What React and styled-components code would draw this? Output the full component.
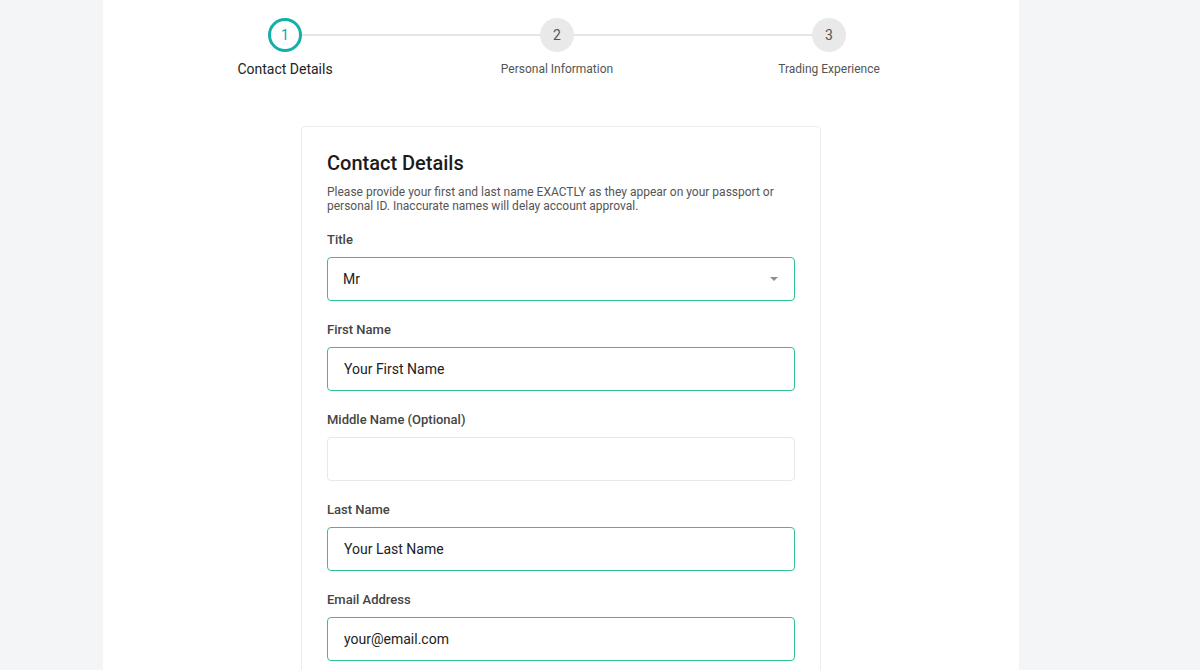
import React, { useState } from "react";
import styled, { createGlobalStyle } from "styled-components";

const GlobalStyle = createGlobalStyle`
  html, body {
    margin: 0;
    padding: 0;
    background: #f4f5f7;
    font-family: Roboto, "Liberation Sans", Arial, sans-serif;
  }
  * { box-sizing: border-box; }
`;

const steps = ["Contact Details", "Personal Information", "Trading Experience"];

const fields = [
  { label: "First Name", name: "first", value: "Your First Name", filled: true },
  { label: "Middle Name (Optional)", name: "middle", value: "", filled: false },
  { label: "Last Name", name: "last", value: "Your Last Name", filled: true },
  { label: "Email Address", name: "email", value: "your@email.com", filled: true },
];

const App = () => {
  const [form, setForm] = useState(
    fields.reduce((acc, f) => ({ ...acc, [f.name]: f.value }), { title: "Mr" })
  );

  const onChangeHandler = (e) => {
    setForm({ ...form, [e.target.name]: e.target.value });
  };

  return (
    <>
      <GlobalStyle />
      <Page>
        <Column>
          <Stepper>
            {steps.map((s, i) => (
              <Step key={s} $first={i === 0} $last={i === steps.length - 1}>
                <Circle $active={i === 0}>{i + 1}</Circle>
                <StepLabel $active={i === 0}>{s}</StepLabel>
              </Step>
            ))}
          </Stepper>

          <Card>
            <CardTitle>Contact Details</CardTitle>
            <Description>
              Please provide your first and last name EXACTLY as they appear on your passport or
              personal ID. Inaccurate names will delay account approval.
            </Description>

            <Field>
              <Label>Title</Label>
              <SelectWrap>
                <Select name="title" value={form.title} onChange={onChangeHandler}>
                  <option>Mr</option>
                  <option>Mrs</option>
                  <option>Ms</option>
                </Select>
                <Caret />
              </SelectWrap>
            </Field>

            {fields.map((f) => (
              <Field key={f.name}>
                <Label>{f.label}</Label>
                <Input
                  name={f.name}
                  value={form[f.name]}
                  onChange={onChangeHandler}
                  $filled={f.filled}
                />
              </Field>
            ))}
          </Card>
        </Column>
      </Page>
    </>
  );
};

const Page = styled.div`
  width: 100%;
  min-height: 100vh;
  display: flex;
  justify-content: flex-start;
  padding-left: 103px;
`;
const Column = styled.div`
  width: 916px;
  background: #fff;
  min-height: 100vh;
  display: flex;
  flex-direction: column;
  align-items: center;
  padding-top: 18px;
`;
const Stepper = styled.div`
  display: grid;
  grid-template-columns: repeat(3, 272px);
  margin-right: 8px;
`;
const Step = styled.div`
  position: relative;
  display: flex;
  flex-direction: column;
  align-items: center;
  &::before,
  &::after {
    content: "";
    position: absolute;
    top: 16px;
    height: 2px;
    background: #e6e6e6;
    width: calc(50% - 17px);
  }
  &::before {
    left: 0;
    display: ${(p) => (p.$first ? "none" : "block")};
  }
  &::after {
    right: 0;
    display: ${(p) => (p.$last ? "none" : "block")};
  }
`;
const Circle = styled.div`
  width: 34px;
  height: 34px;
  border-radius: 50%;
  display: flex;
  align-items: center;
  justify-content: center;
  font-size: 14px;
  background: ${(p) => (p.$active ? "#fff" : "#e9e9e9")};
  border: ${(p) => (p.$active ? "3px solid #13b0aa" : "none")};
  color: ${(p) => (p.$active ? "#13a5a0" : "#555")};
`;
const StepLabel = styled.div`
  margin-top: 9px;
  line-height: 17px;
  font-size: ${(p) => (p.$active ? "14px" : "12px")};
  color: ${(p) => (p.$active ? "#222" : "#555")};
  white-space: nowrap;
`;
const Card = styled.div`
  width: 520px;
  margin-top: 48px;
  border: 1px solid #ececec;
  border-radius: 4px;
  padding: 24px 25px 20px;
`;
const CardTitle = styled.h2`
  margin: 0;
  font-size: 20px;
  font-weight: 500;
  line-height: 24px;
  color: #1b1b1b;
`;
const Description = styled.p`
  margin: 10px 0 18px;
  font-size: 12px;
  line-height: 14px;
  color: #555;
`;
const Field = styled.div`
  display: flex;
  flex-direction: column;
  margin-bottom: 20px;
`;
const Label = styled.label`
  font-size: 13px;
  font-weight: 500;
  line-height: 18px;
  color: #444;
  margin-bottom: 8px;
`;
const Input = styled.input`
  width: 468px;
  height: 44px;
  padding: 0 16px;
  border-radius: 4px;
  border: 1px solid ${(p) => (p.$filled ? "#35c08f" : "#e8e8e8")};
  font-family: inherit;
  font-size: 14px;
  color: #222;
  outline: none;
  background: #fff;
`;
const SelectWrap = styled.div`
  position: relative;
  width: 468px;
`;
const Select = styled.select`
  width: 100%;
  height: 44px;
  padding: 0 15px;
  border-radius: 4px;
  border: 1px solid #2fc48f;
  font-family: inherit;
  font-size: 14px;
  color: #222;
  background: #fff;
  appearance: none;
  outline: none;
`;
const Caret = styled.span`
  position: absolute;
  right: 17px;
  top: 20px;
  width: 0;
  height: 0;
  border-left: 4px solid transparent;
  border-right: 4px solid transparent;
  border-top: 4px solid #8a8f8f;
  pointer-events: none;
`;

export default App;
